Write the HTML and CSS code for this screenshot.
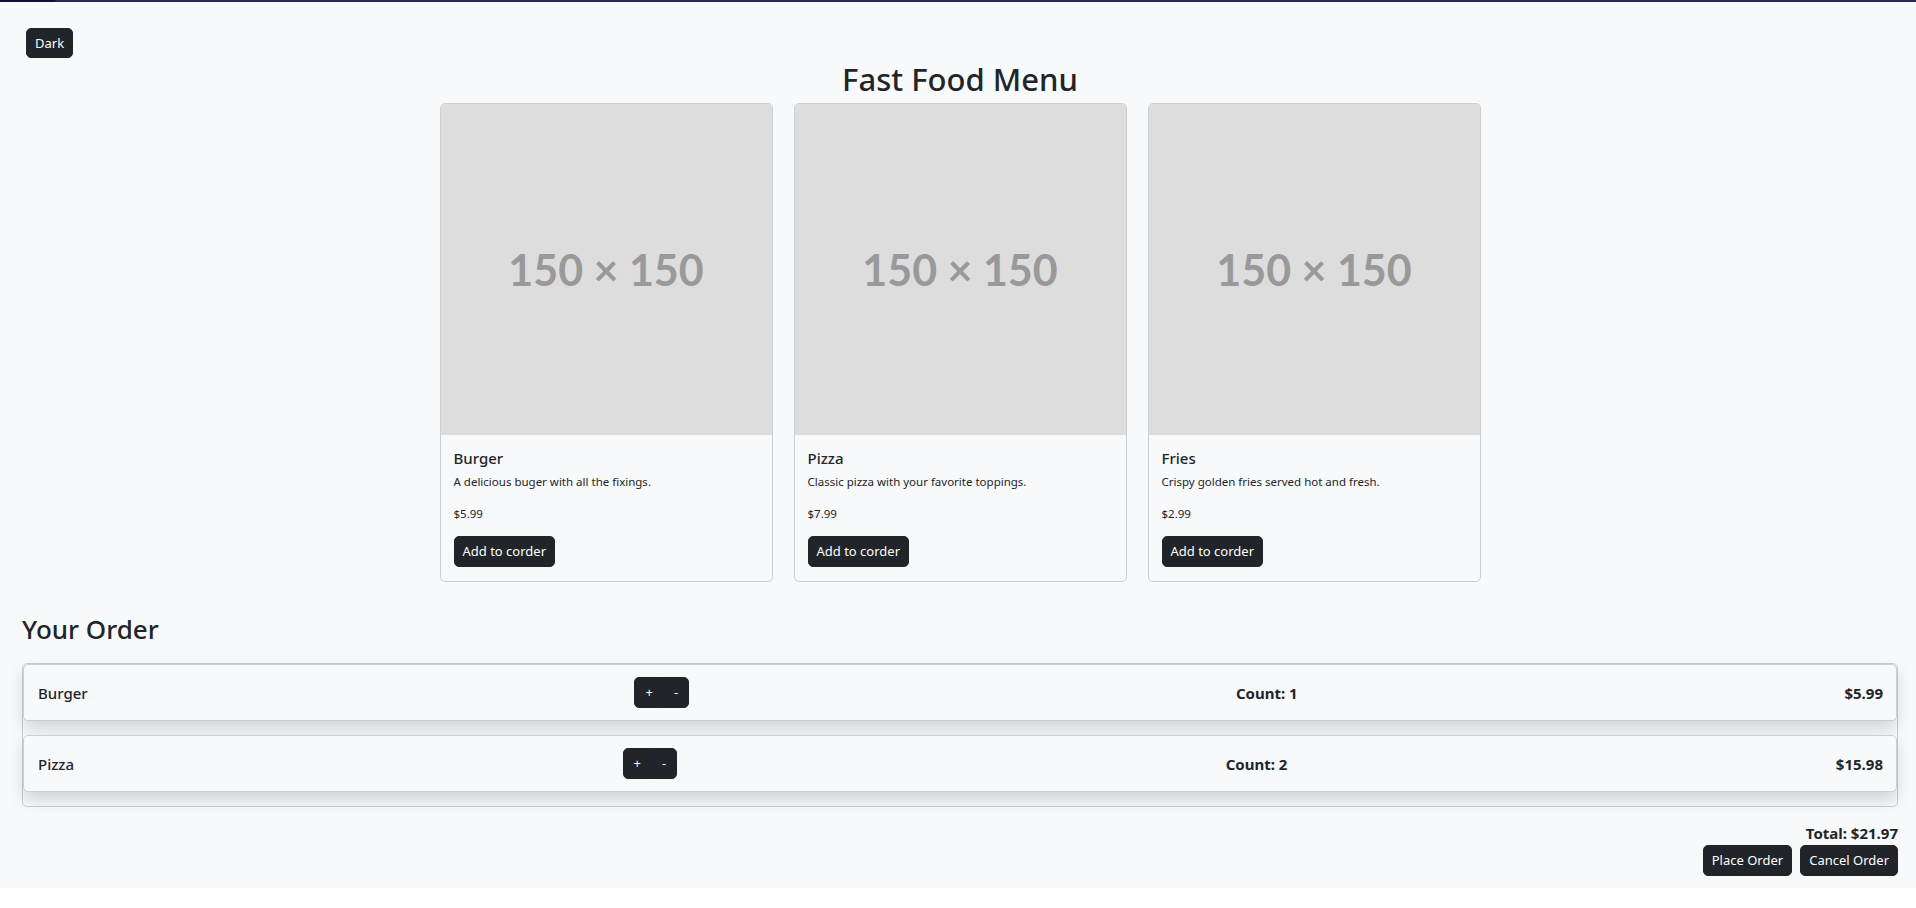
FILE: index.html
```html
<!DOCTYPE html>
<html lang="en">

<head>
  <meta charset="UTF-8">
  <meta name="viewport" content="width=device-width, initial-scale=1.0">
  <title>Fast Food Menu</title>
  <link rel="stylesheet" href="styles.css">
</head>

<body>

  <div class="top-line"></div>

  <div class="app" id="app">
    <button class="btn theme-btn" id="themeBtn">Dark</button>

    <h2 class="menu-title">Fast Food Menu</h2>

    <!-- menu cards -->
    <div class="menu">
      <div class="card">
        <div class="card-img">150 × 150</div>
        <div class="card-body">
          <h5 class="card-title">Burger</h5>
          <p class="card-text">A delicious buger with all the fixings.</p>
          <p class="card-text price">$5.99</p>
          <button class="btn">Add to corder</button>
        </div>
      </div>
      <div class="card">
        <div class="card-img">150 × 150</div>
        <div class="card-body">
          <h5 class="card-title">Pizza</h5>
          <p class="card-text">Classic pizza with your favorite toppings.</p>
          <p class="card-text price">$7.99</p>
          <button class="btn">Add to corder</button>
        </div>
      </div>
      <div class="card">
        <div class="card-img">150 × 150</div>
        <div class="card-body">
          <h5 class="card-title">Fries</h5>
          <p class="card-text">Crispy golden fries served hot and fresh.</p>
          <p class="card-text price">$2.99</p>
          <button class="btn">Add to corder</button>
        </div>
      </div>
    </div>

    <!-- order -->
    <h3 class="order-title">Your Order</h3>
    <div class="order-list">
      <div class="order-item">
        <span class="item-name">Burger</span>
        <div class="qty">
          <button class="btn">+</button>
          <button class="btn">-</button>
        </div>
        <strong>Count: 1</strong>
        <strong>$5.99</strong>
      </div>
      <div class="order-item">
        <span class="item-name">Pizza</span>
        <div class="qty">
          <button class="btn">+</button>
          <button class="btn">-</button>
        </div>
        <strong>Count: 2</strong>
        <strong>$15.98</strong>
      </div>
    </div>

    <p class="total">Total: $21.97</p>
    <div class="actions">
      <button class="btn">Place Order</button>
      <button class="btn">Cancel Order</button>
    </div>
  </div>

</body>

</html>
```

FILE: styles.css
```css
body {
  margin: 0;
  font-family: "Noto Sans", "Open Sans", sans-serif;
  color: #212529;
  background: #fff;
}

.top-line {
  height: 2px;
  background: linear-gradient(90deg, #160f3a 0, #160f3a 55px, #2c2956 56px, #2c2956 100%);
}

.app {
  background: #f8f9fa;
  padding: 26px 18px 12px 22px;
}

.btn {
  background: #212529;
  color: #fff;
  border: 1px solid #212529;
  border-radius: 5px;
  font-family: inherit;
  font-size: 13px;
  line-height: 21px;
  padding: 4px 8px;
  cursor: pointer;
}

.theme-btn {
  margin-left: 4px;
  line-height: 20px;
  padding: 4px 8px;
}

.menu-title {
  text-align: center;
  font-size: 31px;
  font-weight: 500;
  line-height: 42px;
  margin: 0 0 3px;
}

.menu {
  display: flex;
  justify-content: center;
  gap: 21px;
}

.card {
  width: 331px;
  border: 1px solid #cdcecf;
  border-radius: 5px;
  overflow: hidden;
  background: #f8f9fa;
}

.card-img {
  height: 331px;
  background: #ddd;
  display: flex;
  align-items: center;
  justify-content: center;
  font-family: Lato, sans-serif;
  font-weight: 700;
  font-size: 43px;
  color: #999;
}

.card-body {
  padding: 14px 12px 14px 13px;
}

.card-title {
  font-size: 15px;
  font-weight: 500;
  line-height: 19px;
  margin: 0 0 5px;
}

.card-text {
  font-size: 11.5px;
  line-height: 18px;
  margin: 0 0 14px;
}

.card-text.price {
  margin-bottom: 13px;
}

.order-title {
  font-size: 26px;
  font-weight: 500;
  line-height: 34px;
  margin: 30px 0 17px;
}

.order-list {
  border: 1px solid #cdcecf;
  border-radius: 5px;
}

.order-item {
  display: flex;
  justify-content: space-between;
  align-items: center;
  padding: 12px 13px 12px 14px;
  border: 1px solid #cdcecf;
  border-radius: 5px;
  margin-bottom: 14px;
  background: #f8f9fa;
  box-shadow: 0 8px 16px rgba(0, 0, 0, 0.15);
  font-size: 15px;
}

.item-name {
  font-weight: 500;
}

.qty {
  display: flex;
}

.qty .btn {
  border-radius: 0;
  padding: 4px 10px;
  font-size: 13px;
}

.qty .btn:first-child {
  border-radius: 5px 0 0 5px;
}

.qty .btn:last-child {
  border-radius: 0 5px 5px 0;
  margin-left: -1px;
}

.total {
  text-align: right;
  font-weight: 700;
  font-size: 15px;
  line-height: 24px;
  margin: 14px 0 0;
}

.actions {
  display: flex;
  justify-content: flex-end;
  gap: 8px;
}
```
